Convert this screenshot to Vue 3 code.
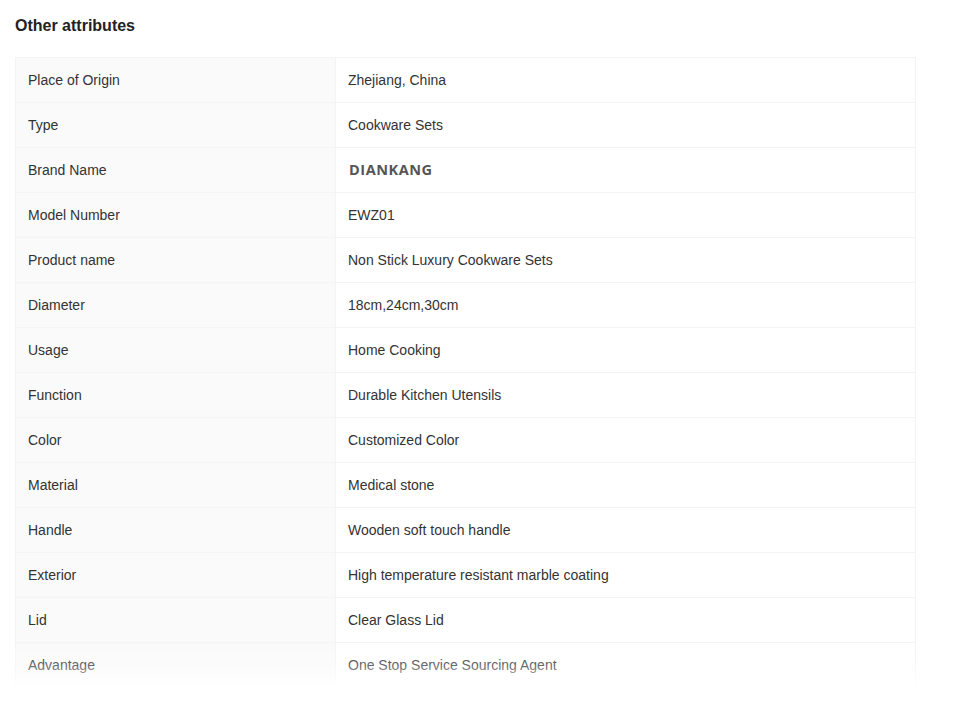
<script setup>
const rows = [
  ['Place of Origin', 'Zhejiang, China'],
  ['Type', 'Cookware Sets'],
  ['Brand Name', 'DIANKANG'],
  ['Model Number', 'EWZ01'],
  ['Product name', 'Non Stick Luxury Cookware Sets'],
  ['Diameter', '18cm,24cm,30cm'],
  ['Usage', 'Home Cooking'],
  ['Function', 'Durable Kitchen Utensils'],
  ['Color', 'Customized Color'],
  ['Material', 'Medical stone'],
  ['Handle', 'Wooden soft touch handle'],
  ['Exterior', 'High temperature resistant marble coating'],
  ['Lid', 'Clear Glass Lid'],
  ['Advantage', 'One Stop Service Sourcing Agent'],
]
</script>

<template>
  <div class="page">
    <h3 class="title">Other attributes</h3>
    <div class="clip">
      <div class="table">
        <div v-for="r in rows" :key="r[0]" class="row">
          <div class="label">{{ r[0] }}</div>
          <div class="value">
            <span v-if="r[0] === 'Brand Name'" class="brand">{{ r[1] }}</span>
            <template v-else>{{ r[1] }}</template>
          </div>
        </div>
      </div>
      <div class="fade"></div>
    </div>
  </div>
</template>

<style>
html, body { margin: 0; background: #fff; }
</style>

<style scoped>
.page {
  width: 901px;
  height: 706px;
  margin-left: 15px;
  font-family: "Liberation Sans", Arial, sans-serif;
  color: #333;
  overflow: hidden;
}
.title {
  margin: 0;
  padding-top: 16px;
  height: 41px;
  font-size: 16px;
  line-height: 19px;
  font-weight: 700;
  color: #222;
}
.clip {
  position: relative;
  height: 630px;
  overflow: hidden;
}
.table {
  border-top: 1px solid #f4f4f4;
  border-left: 1px solid #f4f4f4;
  border-right: 1px solid #f4f4f4;
}
.row {
  display: flex;
  height: 45px;
  box-sizing: border-box;
  border-bottom: 1px solid #f4f4f4;
  font-size: 14px;
  line-height: 44px;
}
.label {
  width: 320px;
  padding-left: 12px;
  box-sizing: border-box;
  background: #fafafa;
  border-right: 1px solid #f4f4f4;
}
.value {
  flex: 1;
  padding-left: 12px;
}
.brand {
  font-family: "Open Sans", sans-serif;
  font-weight: 700;
  font-size: 14.5px;
  letter-spacing: 0.55px;
  color: #555;
  padding-left: 1px;
}
.fade {
  position: absolute;
  left: 0;
  right: 0;
  bottom: 0;
  height: 44px;
  background: linear-gradient(to bottom, rgba(255, 255, 255, 0), rgba(255, 255, 255, 0.25) 50%, rgba(255, 255, 255, 0.92));
}
</style>
